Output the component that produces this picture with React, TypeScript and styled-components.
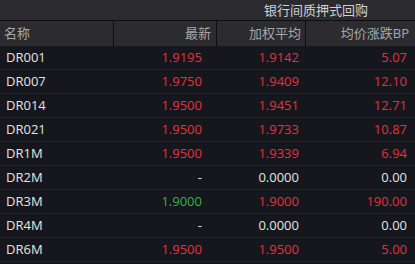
import React from 'react';
import styled, { createGlobalStyle } from 'styled-components';

const GlobalStyle = createGlobalStyle`
    body {
        margin: 0;
        background-color: #15171c;
        font-family: "Open Sans", "Noto Sans CJK SC", sans-serif;
    }
`

type Row = { name: string; last: string; avg: string; bp: string; lastTone: Tone; avgTone: Tone; bpTone: Tone };
type Tone = 'up' | 'down' | 'flat';

const rows: Row[] = [
    { name: 'DR001', last: '1.9195', avg: '1.9142', bp: '5.07', lastTone: 'up', avgTone: 'up', bpTone: 'up' },
    { name: 'DR007', last: '1.9750', avg: '1.9409', bp: '12.10', lastTone: 'up', avgTone: 'up', bpTone: 'up' },
    { name: 'DR014', last: '1.9500', avg: '1.9451', bp: '12.71', lastTone: 'up', avgTone: 'up', bpTone: 'up' },
    { name: 'DR021', last: '1.9500', avg: '1.9733', bp: '10.87', lastTone: 'up', avgTone: 'up', bpTone: 'up' },
    { name: 'DR1M', last: '1.9500', avg: '1.9339', bp: '6.94', lastTone: 'up', avgTone: 'up', bpTone: 'up' },
    { name: 'DR2M', last: '-', avg: '0.0000', bp: '0.00', lastTone: 'flat', avgTone: 'flat', bpTone: 'flat' },
    { name: 'DR3M', last: '1.9000', avg: '1.9000', bp: '190.00', lastTone: 'down', avgTone: 'up', bpTone: 'up' },
    { name: 'DR4M', last: '-', avg: '0.0000', bp: '0.00', lastTone: 'flat', avgTone: 'flat', bpTone: 'flat' },
    { name: 'DR6M', last: '1.9500', avg: '1.9500', bp: '5.00', lastTone: 'up', avgTone: 'up', bpTone: 'up' },
];

const toneColor: Record<Tone, string> = {
    up: '#e8303b',
    down: '#2db848',
    flat: '#e4e4e4',
};

function App() {
    return (
        <Wrap>
            <GlobalStyle/>
            <TopBar>
                <TopSpacer/>
                <TopTitle>银行间质押式回购</TopTitle>
            </TopBar>
            <HeadRow>
                <HeadCell $w={114} $align="left" $pad="0 0 0 4px">名称</HeadCell>
                <HeadCell $w={103} $pad="0 5px 0 0">最新</HeadCell>
                <HeadCell $w={89} $pad="0 4px 0 0">加权平均</HeadCell>
                <HeadCell $w={109} $last $pad="0 6px 0 0">均价涨跌BP</HeadCell>
            </HeadRow>
            {rows.map(r => (
                <BodyRow key={r.name}>
                    <NameCell>{r.name}</NameCell>
                    <NumCell $w={103} $pad={15} $tone={r.lastTone}>{r.last}</NumCell>
                    <NumCell $w={89} $pad={7} $tone={r.avgTone}>{r.avg}</NumCell>
                    <NumCell $w={109} $pad={8} $tone={r.bpTone}>{r.bp}</NumCell>
                </BodyRow>
            ))}
        </Wrap>
    )
}

const Wrap = styled.div`
    width: 415px;
    height: 264px;
    overflow: hidden;
    background-color: #15171c;
`

const TopBar = styled.div`
    display: flex;
    height: 20px;
    background-color: #2a2a2f;
    border-bottom: 1px solid #0e0e11;
`

const TopSpacer = styled.div`
    width: 217px;
`

const TopTitle = styled.div`
    flex: 1;
    text-align: center;
    line-height: 20px;
    font-size: 13px;
    color: #d2d2d2;
`

const HeadRow = styled.div`
    display: flex;
    height: 25px;
    background-color: #2b2b30;
`

const HeadCell = styled.div<{ $w: number; $align?: string; $pad: string; $last?: boolean }>`
    width: ${p => p.$w}px;
    box-sizing: border-box;
    padding: ${p => p.$pad};
    text-align: ${p => p.$align || 'right'};
    line-height: 25px;
    font-size: 13px;
    color: #a8a8a8;
    border-right: ${p => p.$last ? 'none' : '1px solid #0e0e11'};
`

const BodyRow = styled.div`
    display: flex;
    height: 23px;
    border-bottom: 1px solid #23262b;
    font-size: 13px;
    line-height: 23px;
`

const NameCell = styled.div`
    width: 114px;
    box-sizing: border-box;
    padding-left: 6px;
    color: #e4e4e4;
`

const NumCell = styled.div<{ $w: number; $pad: number; $tone: Tone }>`
    width: ${p => p.$w}px;
    box-sizing: border-box;
    padding-right: ${p => p.$pad}px;
    text-align: right;
    color: ${p => toneColor[p.$tone]};
`

export default App;
